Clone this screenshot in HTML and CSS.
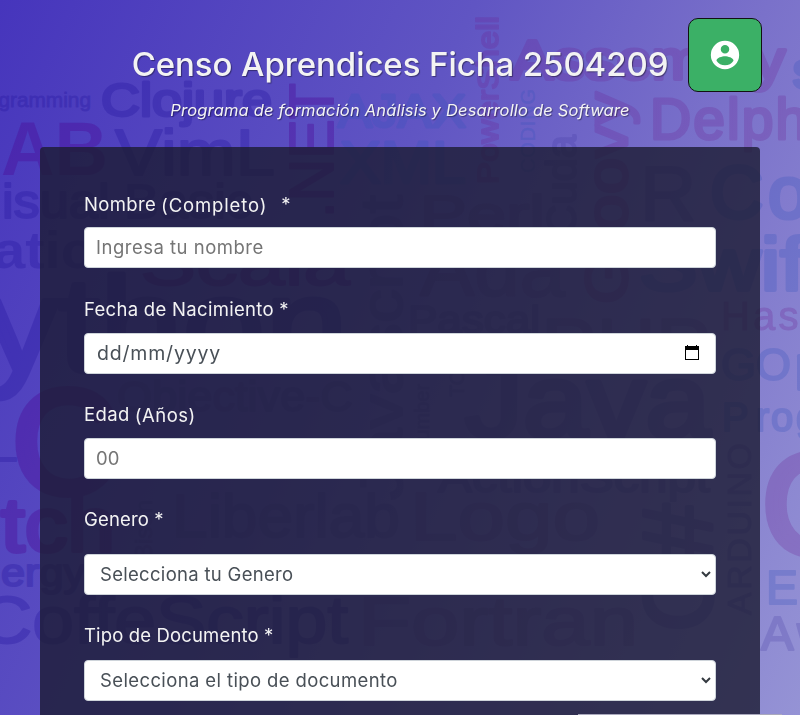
FILE: index.html
```
<!DOCTYPE html>
<html lang="es">
<head>
<meta charset="utf-8">
<title>Censo Aprendices</title>
<link rel="stylesheet" href="styles.css">
</head>
<body>
<svg class="cloud" width="800" height="715" viewBox="0 0 800 715" aria-hidden="true">
  <g class="navy">
    <text x="-34" y="107" font-size="21" textLength="125" lengthAdjust="spacingAndGlyphs" stroke-width=".8">Programming</text>
    <text x="101" y="116" font-size="47" stroke-width="3" textLength="171" lengthAdjust="spacingAndGlyphs">Clojure</text>
    <text x="115" y="175" font-size="65" textLength="160" lengthAdjust="spacingAndGlyphs">VimL</text>
    <text x="2" y="218" font-size="48" textLength="250" lengthAdjust="spacingAndGlyphs">isual Basic</text>
    <text x="-7" y="268" font-size="52" font-weight="bold" stroke-width="0" textLength="100" lengthAdjust="spacingAndGlyphs">atic</text>
    <text x="-16" y="371" font-size="134" stroke-width="5" textLength="364" lengthAdjust="spacingAndGlyphs">ython</text>
    <text x="-30" y="471" font-size="46">—</text>
    <text x="1" y="586" font-size="38" textLength="84" lengthAdjust="spacingAndGlyphs">ergy</text>
    <text x="-22" y="643" font-size="66" textLength="370" lengthAdjust="spacingAndGlyphs">CoffeScript</text>
  </g>
  <g class="slate">
    <text x="117" y="411" font-size="42" textLength="236" lengthAdjust="spacingAndGlyphs">Objective-C</text>
    <text x="172" y="537" font-size="62" textLength="228" lengthAdjust="spacingAndGlyphs">Liberlab</text>
    <text x="761" y="650" font-size="49" textLength="100">Awk</text>
    <text transform="translate(402 500) rotate(-90)" font-size="60" textLength="305" lengthAdjust="spacingAndGlyphs">Javascript</text>
    <text transform="translate(576 235) rotate(-90)" font-size="42" textLength="100">Cuda</text>
    <text transform="translate(712 632) rotate(-90)" font-size="98" stroke-width="4" textLength="128">C#</text>
    <text transform="translate(751 615) rotate(-90)" font-size="34" stroke-width="1" textLength="172">ARDUINO</text>
    <text transform="translate(152 560) rotate(-90)" font-size="24" stroke-width="1">Bison</text>
    <text transform="translate(429 455) rotate(-90)" font-size="20" stroke-width="1">Number</text>
    <text transform="translate(464 397) rotate(-90)" font-size="20" stroke-width="1">TO</text>
    <text x="465" y="437" font-size="104" stroke-width="5" textLength="245" lengthAdjust="spacingAndGlyphs">Java</text>
    <text x="438" y="492" font-size="43" textLength="272" lengthAdjust="spacingAndGlyphs">ActionScript</text>
    <text x="640" y="220" font-size="78">R</text>
    <text x="408" y="333" font-size="38" textLength="132" lengthAdjust="spacingAndGlyphs">Pascal</text>
  </g>
  <g class="violet">
    <text x="1" y="175" font-size="76" font-weight="bold" textLength="107" lengthAdjust="spacingAndGlyphs" stroke-width="0">AB</text>
    <text transform="translate(333 218) rotate(-90)" font-size="63" textLength="135" lengthAdjust="spacingAndGlyphs">.NET</text>
    <text x="12" y="493" font-size="146" stroke-width="8">C</text>
    <text x="1" y="551" font-size="76" stroke-width="4" textLength="114" lengthAdjust="spacingAndGlyphs">tch</text>
    <text x="140" y="285" font-size="65" textLength="210" lengthAdjust="spacingAndGlyphs">Scala</text>
  </g>
  <g class="blue">
    <text x="338" y="127" font-size="47" stroke-width="3" textLength="128" lengthAdjust="spacingAndGlyphs">AJAX</text>
    <text x="340" y="183" font-size="60" stroke-width="3" textLength="126" lengthAdjust="spacingAndGlyphs">XML</text>
    <text transform="translate(535 173) rotate(-90)" font-size="20" stroke-width=".5" textLength="84">CODING</text>
    <text x="710 768" y="218" font-size="74" stroke-width="4">Co</text>
    <text x="639" y="290" font-size="74" stroke-width="4" textLength="190" lengthAdjust="spacingAndGlyphs">Swift</text>
    <text x="721" y="380" font-size="45" textLength="70">GO</text>
    <text x="796" y="380" font-size="45" stroke-width="4">p</text>
    <text x="722 756 771 796" y="431" font-size="40">Prog</text>
    <text x="766" y="604" font-size="48">E</text>
    <text x="793" y="88" font-size="50" stroke-width="4">s</text>
  </g>
  <g class="plum">
    <text transform="translate(498 184) rotate(-90)" font-size="30" textLength="168" lengthAdjust="spacingAndGlyphs">PowerShell</text>
    <text x="511" y="79" font-size="56" stroke-width="4" textLength="274" lengthAdjust="spacingAndGlyphs">Assembly</text>
    <text x="650" y="139" font-size="57" stroke-width="3" textLength="172">Delphi</text>
    <text transform="translate(627 304) rotate(-90)" font-size="60" stroke-width="3" textLength="212" lengthAdjust="spacingAndGlyphs">Groovy</text>
    <text x="721" y="330" font-size="40" stroke-width="1" textLength="150">Haskell</text>
    <text x="762" y="554" font-size="142" stroke-width="8">C</text>
  </g>
  <g class="mauve">
    <text x="420" y="232" font-size="52" textLength="125" lengthAdjust="spacingAndGlyphs">Perl</text>
    <text x="420" y="296" font-size="78" textLength="145" lengthAdjust="spacingAndGlyphs">Ada</text>
    <text x="541" y="372" font-size="76" textLength="170" lengthAdjust="spacingAndGlyphs">PHP</text>
    <text x="410" y="540" font-size="68" textLength="190" lengthAdjust="spacingAndGlyphs">Logo</text>
    <text x="358" y="645" font-size="68" textLength="280" lengthAdjust="spacingAndGlyphs">Fortran</text>
  </g>
</svg>
<button class="user" aria-label="Usuario"><svg width="34" height="34" viewBox="0 0 24 24"><path fill="#fff" fill-rule="evenodd" d="M12 2a10 10 0 1 0 0 20 10 10 0 0 0 0-20zm0 3a3 3 0 1 1 0 6 3 3 0 0 1 0-6zm0 14.2a7.2 7.2 0 0 1-6-3.22c.03-1.99 4-3.08 6-3.08s5.97 1.09 6 3.08a7.2 7.2 0 0 1-6 3.22z"/></svg></button>
<header>
  <h1>Censo Aprendices Ficha 2504209</h1>
  <p>Programa de formación Análisis y Desarrollo de Software</p>
</header>
<form>
  <div class="group first"><div class="label"><span class="l-nom">Nombre</span><span class="l-com">(Completo)</span><span>*</span></div><div class="control hint"><span class="c-nom">Ingresa tu nombre</span></div></div>
  <div class="group"><div class="label"><span class="l-fec">Fecha de Nacimiento *</span></div><div class="control"><span class="c-fec">dd/mm/yyyy</span><svg class="cal" width="14" height="15" viewBox="0 0 14 15"><path fill="#000" fill-rule="evenodd" d="M0 1h2V0h1v1h8V0h1v1h2v14H0zM1 5v9h12V5z"/></svg></div></div>
  <div class="group"><div class="label"><span class="l-eda">Edad</span><span class="l-ano">(Años)</span></div><div class="control hint"><span class="c-eda">00</span></div></div>
  <div class="group gender"><div class="label"><span class="l-gen">Genero *</span></div><div class="control select"><span class="c-gen">Selecciona tu Genero</span><svg class="arrow" width="10" height="7" viewBox="0 0 10 7"><path d="M1 1l4 4 4-4" fill="none" stroke="#343a40" stroke-width="2"/></svg></div></div>
  <div class="group"><div class="label"><span class="l-tip">Tipo de Documento *</span></div><div class="control select"><span class="c-tip">Selecciona el tipo de documento</span><svg class="arrow" width="10" height="7" viewBox="0 0 10 7"><path d="M1 1l4 4 4-4" fill="none" stroke="#343a40" stroke-width="2"/></svg></div></div>
</form>
<div class="toast"></div>
</body>
</html>
```
FILE: styles.css
```
* { box-sizing: border-box; }
html, body { margin: 0; height: 715px; overflow: hidden; }
body {
  position: relative;
  font: 400 18px/27px Inter, "Open Sans", sans-serif;
  color: #f3f3f3;
  background: linear-gradient(115deg, #4635bc 0%, #6055c3 42%, #7a71ca 68%, #9593d5 100%);
}
.cloud { position: absolute; inset: 0; z-index: -1; font-family: "Liberation Sans", sans-serif; }
.cloud g { stroke-width: 2; stroke-linejoin: round; }
.navy { fill: #2415a0; stroke: #2415a0; opacity: .32; }
.slate { fill: #38309c; stroke: #38309c; opacity: .2; }
.violet { fill: #4c0896; stroke: #4c0896; opacity: .36; }
.blue { fill: #3653bd; stroke: #3653bd; opacity: .27; }
.plum { fill: #6d2090; stroke: #6d2090; opacity: .25; }
.mauve { fill: #552090; stroke: #552090; opacity: .17; }
.user {
  position: absolute; left: 688px; top: 18px; width: 74px; height: 74px; padding: 0;
  display: flex; align-items: center; justify-content: center;
  background: #3bb066; border: 1px solid #111; border-radius: 10px;
}
header { height: 147px; padding-top: 40px; text-align: center; text-shadow: 1px 1px 1px rgba(0,0,0,.4); white-space: nowrap; }
h1 { margin: 0; font-size: 33px; line-height: 48px; font-weight: 500; letter-spacing: -.08px; }
header p { margin: 10px 0 0; font-size: 16.5px; line-height: 24px; font-style: italic; letter-spacing: .18px; }
form { width: 720px; height: 580px; margin: 0 auto; padding: 44px; background: rgba(27,27,50,.8); border-radius: 4px; }
.group { margin-bottom: 27px; }
.label { display: flex; height: 27px; margin-bottom: 10px; white-space: pre; font-size: 18.5px; }
.first { margin-bottom: 28px; }
.first .label { margin-bottom: 9px; }
.gender .label { margin-bottom: 21px; }
.gender + .group .label { margin-bottom: 11px; }
.control {
  display: flex; align-items: center; height: 41px; padding: 0 12px;
  color: #495057; background: #fff; border: 1px solid #ced4da; border-radius: 4px;
  font-weight: 370;
}
.hint { color: #757575; }
.hint span { margin-left: -1px; }
.select { padding: 0 4px 0 16px; }
.select span { margin-left: -1px; }
.arrow { margin-left: auto; }
.cal { margin: -3px 4px 0 auto; }
.l-nom { letter-spacing: .35px; }
.l-com { margin: 1px 14px 0 5px; letter-spacing: .85px; }
.l-fec { letter-spacing: .3px; }
.l-eda { letter-spacing: .4px; }
.l-ano { margin: 1px 0 0 5px; letter-spacing: .5px; }
.l-gen { letter-spacing: .15px; }
.l-tip { letter-spacing: .15px; }
.c-nom { font-size: 18.5px; letter-spacing: .5px; }
.c-fec { font-size: 19.5px; letter-spacing: .8px; }
.c-eda { font-size: 18.5px; }
.c-gen { font-size: 18.5px; letter-spacing: .3px; }
.c-tip { font-size: 18.5px; letter-spacing: .38px; }
.toast { position: absolute; left: 578px; top: 714px; width: 204px; height: 1px; background: #aaa9bd; }
```
